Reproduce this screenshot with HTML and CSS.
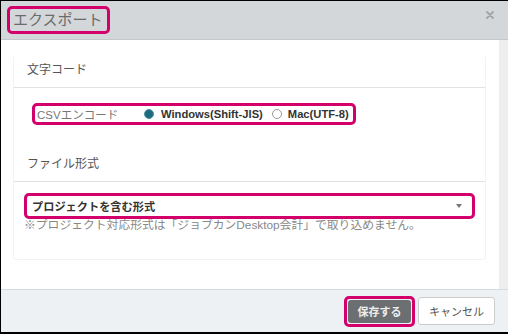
FILE: index.html
```html
<!DOCTYPE html>
<html lang="ja">
<head>
    <meta charset="UTF-8">
    <meta name="viewport" content="width=device-width, initial-scale=1.0">
    <title>エクスポート</title>
    <link rel="stylesheet" href="styles.css">
</head>
<body>
    <div class="modal">
        <div class="modal-header">
            <h1 class="modal-title mark">エクスポート</h1>
            <button class="close" aria-label="閉じる">
                <svg width="8" height="8" viewBox="0 0 8 8"><path d="M1 1L7 7M7 1L1 7" stroke="#a3a6a9" stroke-width="1.8" stroke-linecap="round"/></svg>
            </button>
        </div>

        <div class="modal-body">
            <div class="scroll-area">
                <div class="panel">
                    <div class="panel-head">文字コード</div>
                    <div class="panel-section enc">
                        <div class="enc-row mark">
                            <span class="enc-label">CSVエンコード</span>
                            <label class="radio"><span class="dot checked"></span>Windows(Shift-JIS)</label>
                            <label class="radio"><span class="dot"></span>Mac(UTF-8)</label>
                        </div>
                    </div>

                    <div class="panel-head">ファイル形式</div>
                    <div class="panel-section format">
                        <div class="select mark">
                            <span>プロジェクトを含む形式</span>
                            <span class="caret"></span>
                        </div>
                        <p class="note">※プロジェクト対応形式は「ジョブカンDesktop会計」で取り込めません。</p>
                    </div>
                </div>
            </div>
            <div class="scrollbar"></div>
        </div>

        <div class="modal-footer">
            <span class="mark save-wrap"><button class="btn btn-save">保存する</button></span>
            <button class="btn btn-cancel">キャンセル</button>
        </div>
    </div>
</body>
</html>
```

FILE: styles.css
```css
body {
    margin: 0;
    background: #000;
    font-family: "Liberation Sans", "Noto Sans CJK JP", sans-serif;
    color: #555;
}

.modal {
    width: 507px;
    height: 331px;
    margin: 1px 0 0 1px;
    background: white;
    display: flex;
    flex-direction: column;
    overflow: hidden;
}

/* pink highlight frame */
.mark {
    border: 3px solid #d3006c;
    border-radius: 5px;
    box-sizing: border-box;
}

.modal-header {
    height: 39px;
    box-sizing: border-box;
    background: #d4d7da;
    border-bottom: 1px solid #c4c7ca;
    display: flex;
    justify-content: space-between;
    align-items: flex-start;
    padding: 5px 14px 0 6px;
}

.modal-title {
    margin: 0;
    font-size: 15px;
    font-weight: normal;
    line-height: 22px;
    color: #6b6b6b;
    padding: 0 4px 0 3px;
}

.close {
    border: none;
    background: none;
    padding: 0;
    margin-top: 5px;
    width: 8px;
    height: 8px;
    display: flex;
}

.modal-body {
    height: 249px;
    display: flex;
}

.scroll-area {
    flex: 1;
    padding: 15px 13px 0 12px;
}

.scrollbar {
    width: 9px;
    background: #eeeeee;
}

.panel {
    border: 1px solid #f3f3f3;
    border-top: none;
    border-radius: 4px;
}

.panel-head {
    padding: 6px 13px 8px;
    font-size: 12px;
    line-height: 18px;
    color: #555;
    border-bottom: 1px solid #e2e2e2;
}

.panel-section.enc {
    padding: 15px 0 24px 18px;
}

.enc-row {
    display: inline-flex;
    align-items: center;
    height: 22px;
    padding: 0 4px 0 2px;
    font-size: 11.2px;
}

.enc-label {
    width: 107px;
    font-size: 11.5px;
    color: #777;
}

.radio {
    display: flex;
    align-items: center;
    gap: 7px;
    font-weight: bold;
    color: #333;
    margin-right: 9px;
}

.radio:last-child {
    margin-right: 0;
    gap: 6px;
}

.dot {
    width: 10px;
    height: 10px;
    box-sizing: border-box;
    border-radius: 50%;
    border: 1px solid #9a9a9a;
    background: white;
}

.dot.checked {
    border: 1.5px solid #4b93a3;
    background: #1e6b7d;
}

.panel-section.format {
    padding: 11px 10px 27px 10px;
}

.select {
    height: 26px;
    display: flex;
    align-items: center;
    justify-content: space-between;
    padding: 0 10px 0 5px;
    font-size: 11.2px;
    font-weight: bold;
    color: #333;
}

.caret {
    width: 0;
    height: 0;
    border-left: 3px solid transparent;
    border-right: 3px solid transparent;
    border-top: 4px solid #777;
}

.note {
    margin: -1px 0 0;
    font-size: 11.8px;
    line-height: 14px;
    color: #888;
}

.modal-footer {
    flex: 1;
    background: #eef1f4;
    border-top: 1px solid #d9dcdf;
    display: flex;
    justify-content: flex-end;
    align-items: center;
    gap: 3px;
    padding: 0 13px 0 0;
}

.save-wrap {
    padding: 1px;
    display: flex;
}

.btn {
    font-family: inherit;
    font-size: 11px;
    border-radius: 3px;
    cursor: pointer;
}

.btn-save {
    width: 63px;
    height: 23px;
    background: #6b6f72;
    color: #eee;
    font-weight: bold;
    border: none;
}

.btn-cancel {
    width: 77px;
    height: 28px;
    background: white;
    color: #555;
    border: 1px solid #ccc;
}
```
